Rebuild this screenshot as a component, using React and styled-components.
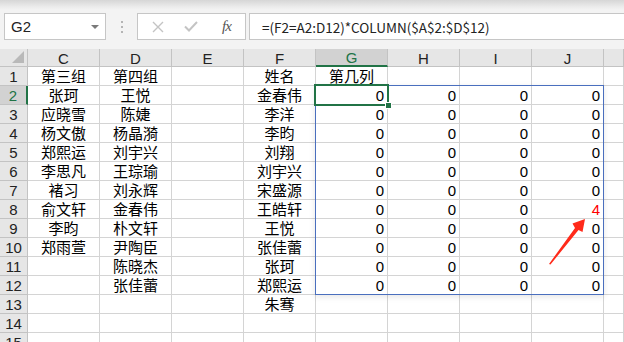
import React from 'react';
import styled, { createGlobalStyle, css } from 'styled-components';

const ROW_HEAD = 28;
const COL_W = 72;
const HEAD_H = 18;
const ROW_H = 19;
const BAR_H = 49;

const GlobalStyle = createGlobalStyle`
  html, body {
    margin: 0;
    padding: 0;
    overflow: hidden;
    background: #ffffff;
  }
  body {
    font-family: 'Liberation Sans', 'Noto Sans CJK SC', sans-serif;
  }
`;

const Page = styled.div`
  width: 624px;
  height: 342px;
  overflow: hidden;
`;

const Toolbar = styled.div`
  height: ${BAR_H}px;
  box-sizing: border-box;
  display: flex;
  align-items: center;
  padding: 4px 0 0 4px;
  background: linear-gradient(#d6d6d6 0px, #ececec 7px, #f3f3f3 10px, #f3f3f3 100%);
`;

const Box = styled.div`
  height: 27px;
  box-sizing: border-box;
  background: #ffffff;
  border: 1px solid #c6c6c6;
  display: flex;
  align-items: center;
`;

const NameBox = styled(Box)`
  width: 102px;
  padding: 0 6px 0 6px;
  justify-content: space-between;
  font-size: 15px;
  color: #222;
`;

const DropArrow = styled.span`
  width: 0;
  height: 0;
  border-left: 4px solid transparent;
  border-right: 4px solid transparent;
  border-top: 4px solid #7a7a7a;
`;

const Grip = styled.div`
  width: 31px;
  display: flex;
  flex-direction: column;
  align-items: center;
  gap: 3px;
  span {
    width: 2px;
    height: 2px;
    background: #b4b4b4;
  }
`;

const FuncBox = styled(Box)`
  width: 109px;
  justify-content: space-around;
  padding: 0 4px 0 4px;
`;

const Fx = styled.span`
  font-family: 'Liberation Serif', serif;
  font-style: italic;
  font-size: 15px;
  color: #555;
  letter-spacing: -1px;
  margin-left: 4px;
`;

const FormulaBox = styled(Box)`
  flex: 1;
  margin-left: 3px;
  border-right: none;
  padding-left: 12px;
  font-family: 'Noto Sans CJK SC', sans-serif;
  font-size: 13.5px;
  color: #222;
`;

const Sheet = styled.div`
  position: relative;
  display: grid;
  grid-template-columns: ${ROW_HEAD}px repeat(8, ${COL_W}px) 1fr;
  grid-template-rows: ${HEAD_H}px repeat(15, ${ROW_H}px);
`;

const Cell = styled.div`
  box-sizing: border-box;
  border-right: 1px solid #d4d4d4;
  border-bottom: 1px solid #d4d4d4;
  font-size: 15px;
  line-height: 16px;
  padding: 2px 3px 0 3px;
  white-space: nowrap;
  color: ${(p) => (p.$red ? '#ff0000' : '#000')};
  text-align: ${(p) => (p.$num ? 'right' : 'center')};
`;

const HeadCell = styled.div`
  box-sizing: border-box;
  background: ${(p) => (p.$active ? '#d2d2d2' : '#e6e6e6')};
  border-right: 1px solid #c3c3c3;
  border-bottom: 1px solid #c3c3c3;
  color: ${(p) => (p.$active ? '#217346' : '#222')};
  font-size: 15px;
  display: flex;
  align-items: center;
  justify-content: center;
`;

const ColHead = styled(HeadCell)`
  padding-top: 1px;
  ${(p) =>
    p.$active &&
    css`
      border-bottom: 2px solid #217346;
    `}
`;

const RowHead = styled(HeadCell)`
  padding-top: 2px;
  align-items: flex-start;
  line-height: 16px;
  ${(p) =>
    p.$active &&
    css`
      border-right: 2px solid #217346;
    `}
`;

const Corner = styled(HeadCell)`
  position: relative;
  &::after {
    content: '';
    position: absolute;
    right: 3px;
    bottom: 3px;
    border-left: 12px solid transparent;
    border-bottom: 12px solid #b9b9b9;
  }
`;

const Range = styled.div`
  position: absolute;
  box-sizing: border-box;
  border: 1px solid #4a6fbe;
  box-shadow: 0 2px 6px rgba(0, 0, 0, 0.1);
  pointer-events: none;
`;

const ActiveCell = styled.div`
  position: absolute;
  box-sizing: border-box;
  border: 2px solid #217346;
  pointer-events: none;
  &::after {
    content: '';
    position: absolute;
    right: -5px;
    bottom: -5px;
    width: 5px;
    height: 5px;
    background: #217346;
    border: 1px solid #fff;
  }
`;

const Arrow = styled.svg`
  position: absolute;
  left: 0;
  top: 0;
  pointer-events: none;
`;

const cols = ['C', 'D', 'E', 'F', 'G', 'H', 'I', 'J', ''];

const colC = ['第三组', '张珂', '应晓雪', '杨文傲', '郑熙运', '李思凡', '褚习', '俞文轩', '李昀', '郑雨萱', '', '', '', '', ''];
const colD = ['第四组', '王悦', '陈婕', '杨晶漪', '刘宇兴', '王琮瑜', '刘永辉', '金春伟', '朴文轩', '尹陶臣', '陈晓杰', '张佳蕾', '', '', ''];
const colF = ['姓名', '金春伟', '李洋', '李昀', '刘翔', '刘宇兴', '宋盛源', '王皓轩', '王悦', '张佳蕾', '张珂', '郑熙运', '朱骞', '', ''];

const valueAt = (r, c) => {
  if (c === 0) return { text: colC[r] };
  if (c === 1) return { text: colD[r] };
  if (c === 3) return { text: colF[r] };
  if (c >= 4 && c <= 7) {
    if (r === 0) return { text: c === 4 ? '第几列' : '' };
    if (r >= 1 && r <= 11) {
      if (c === 7 && r === 7) return { text: '4', num: true, red: true };
      return { text: '0', num: true };
    }
  }
  return { text: '' };
};

const colX = (i) => ROW_HEAD + COL_W * i;
const rowY = (r) => HEAD_H + ROW_H * (r - 1);

export default function App() {
  return (
    <Page>
      <GlobalStyle />
      <Toolbar>
        <NameBox>
          G2
          <DropArrow />
        </NameBox>
        <Grip>
          <span />
          <span />
          <span />
        </Grip>
        <FuncBox>
          <svg width="12" height="12" viewBox="0 0 12 12">
            <path d="M1 1 L11 11 M11 1 L1 11" stroke="#c4c4c4" strokeWidth="1.4" fill="none" />
          </svg>
          <svg width="14" height="11" viewBox="0 0 14 11">
            <path d="M1 5.5 L5 9.5 L13 1" stroke="#c4c4c4" strokeWidth="2" fill="none" />
          </svg>
          <Fx>fx</Fx>
        </FuncBox>
        <FormulaBox>=(F2=A2:D12)*COLUMN($A$2:$D$12)</FormulaBox>
      </Toolbar>
      <Sheet>
        <Corner />
        {cols.map((c, i) => (
          <ColHead key={`h${i}`} $active={c === 'G'}>
            {c}
          </ColHead>
        ))}
        {Array.from({ length: 15 }, (_, r) => (
          <React.Fragment key={`r${r}`}>
            <RowHead $active={r === 1}>{r + 1}</RowHead>
            {cols.map((_, c) => {
              const v = valueAt(r, c);
              return (
                <Cell key={`c${r}-${c}`} $num={v.num} $red={v.red}>
                  {v.text}
                </Cell>
              );
            })}
          </React.Fragment>
        ))}
        <Range
          style={{
            left: colX(4) - 1,
            top: rowY(2) - 1,
            width: COL_W * 4 + 1,
            height: ROW_H * 11 + 1,
          }}
        />
        <ActiveCell
          style={{
            left: colX(4) - 2,
            top: rowY(2) - 2,
            width: COL_W + 3,
            height: ROW_H + 3,
          }}
        />
        <Arrow width="624" height="293" viewBox={`0 ${BAR_H} 624 293`}>
          <polygon
            points="549,264 575,228 572.5,223.5 585,219 582.5,232 578.5,230 550.5,264.5"
            fill="#ff2a1a"
          />
        </Arrow>
      </Sheet>
    </Page>
  );
}
